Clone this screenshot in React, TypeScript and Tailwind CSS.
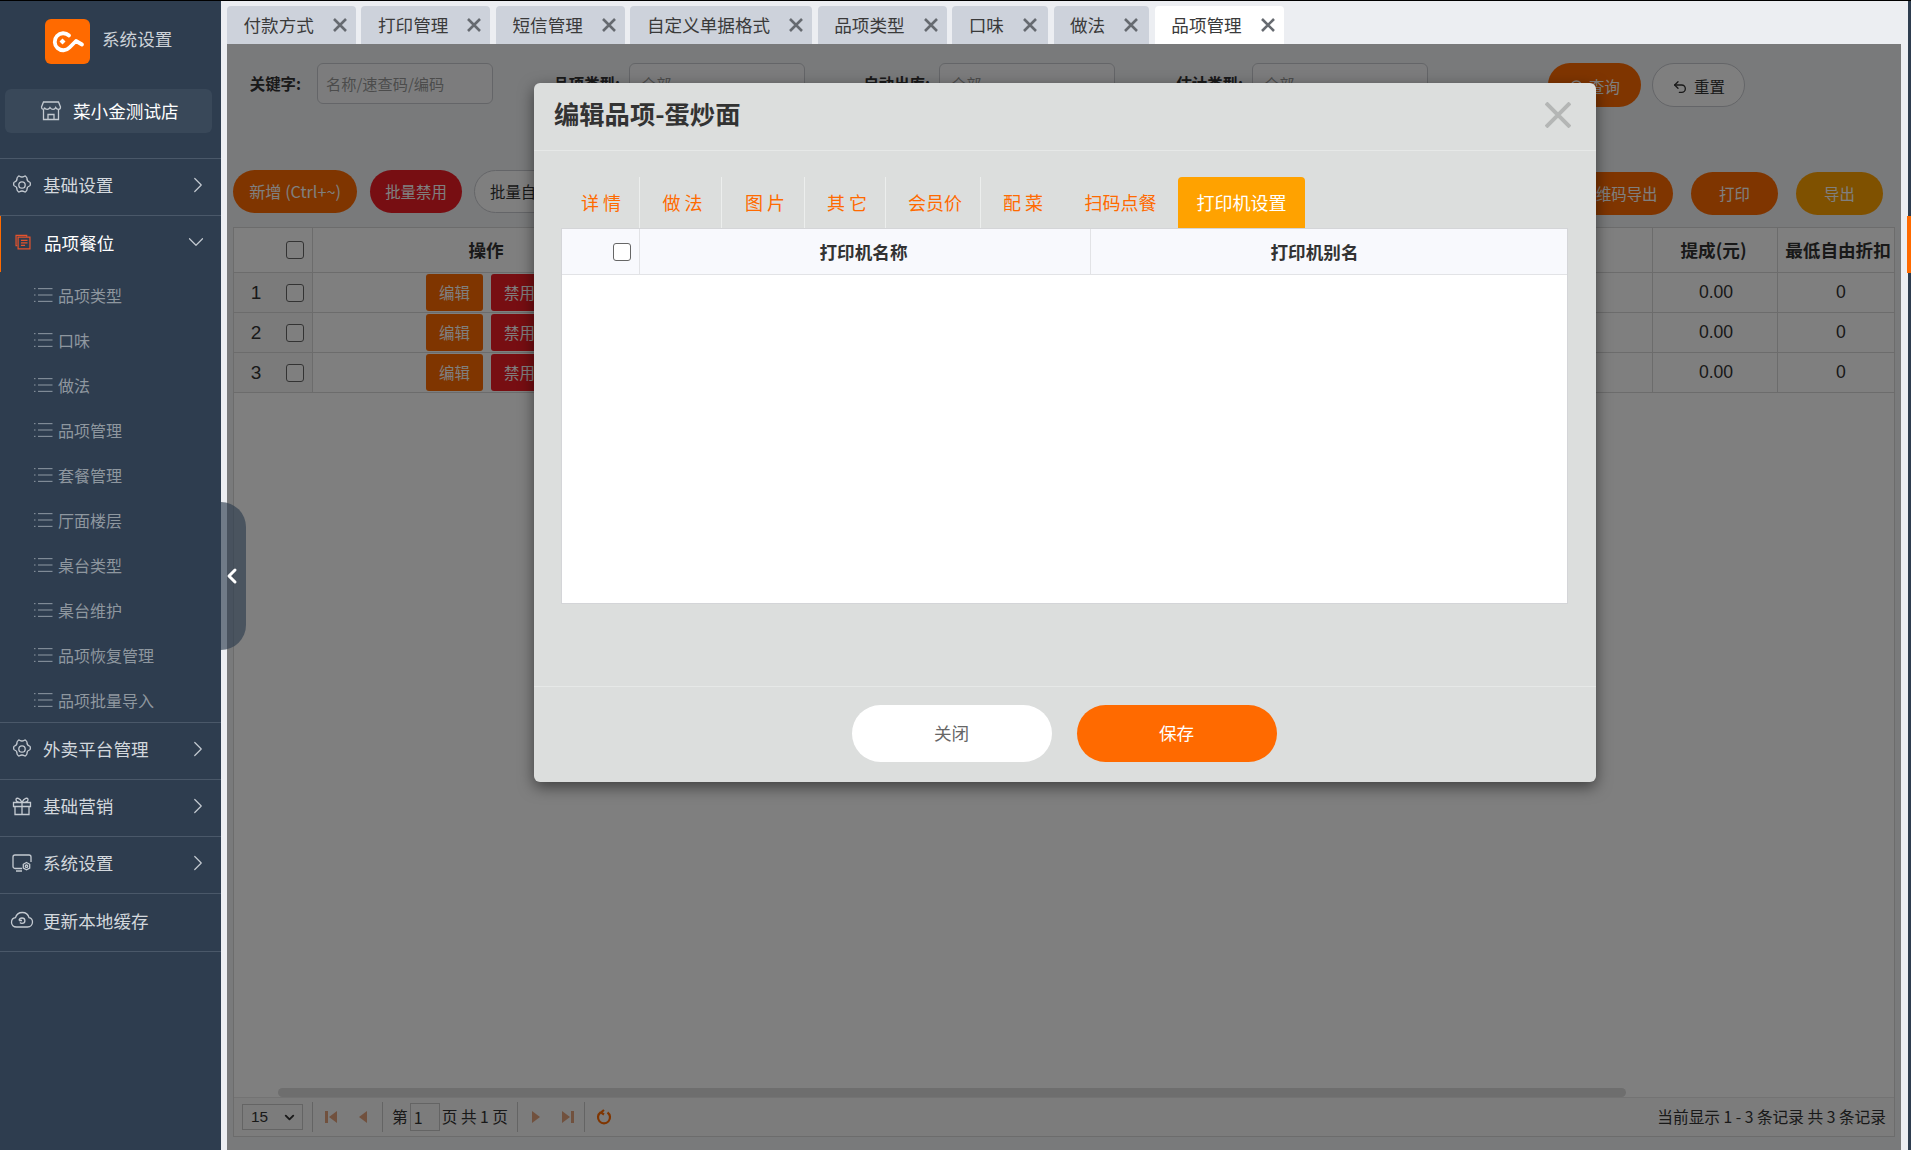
import { ChevronDown, ChevronLeft, ChevronRight, Search, Undo2 } from "lucide-react";

const FONT = "font-['Noto_Sans_CJK_SC','Noto_Sans',sans-serif]";

const pageTabs = [
  { name: "付款方式", cls: "bg-[#cdd2db] pr-[9px]" },
  { name: "打印管理", cls: "bg-[#cdd2db] pr-[9px]" },
  { name: "短信管理", cls: "bg-[#cdd2db] pr-[9px]" },
  { name: "自定义单据格式", cls: "bg-[#cdd2db] pr-[9px]" },
  { name: "品项类型", cls: "bg-[#cdd2db] pr-[9px]" },
  { name: "口味", cls: "bg-[#cdd2db] pr-[11px] pl-[1px]" },
  { name: "做法", cls: "bg-[#cdd2db] pr-[11px] pl-[1px]" },
  { name: "品项管理", cls: "bg-white pr-[9px]" },
];

const subMenu = ["品项类型", "口味", "做法", "品项管理", "套餐管理", "厅面楼层", "桌台类型", "桌台维护", "品项恢复管理", "品项批量导入"];

const modalTabs = [
  { name: "详 情", cls: "w-[81px] border-r border-[#eceeed] pl-[4px]" },
  { name: "做 法", cls: "w-[82px] border-r border-[#eceeed] pl-[4px]" },
  { name: "图 片", cls: "w-[83px] border-r border-[#eceeed] pl-[4px]" },
  { name: "其 它", cls: "w-[81px] border-r border-[#eceeed] pl-[4px]" },
  { name: "会员价", cls: "w-[95px] border-r border-[#eceeed] pl-[4px]" },
  { name: "配 菜", cls: "w-[82px] pl-[2px]" },
  { name: "扫码点餐", cls: "w-[115px]" },
];

const GearIcon = () => (
  <svg width="22" height="22" viewBox="0 0 22 22" fill="none" stroke="currentColor" strokeWidth="1.3">
    <path d="M8.6 2.2c1.3.9 3.5.9 4.8 0 .5-.3 1-.2 1.3.2l.9 1c.3.3.4.7.4 1.100-.1 1.500.9 3 2.400 3.500.5.2.8.6.9 1.100v1.800c-.1.500-.4.900-.9 1.100-1.500.5-2.500 2-2.400 3.500 0 .4-.1.8-.4 1.100l-.9 1c-.3.4-.8.5-1.300.2-1.300-.9-3.500-.9-4.800 0-.5.3-1 .2-1.300-.2l-.9-1c-.3-.3-.4-.7-.4-1.100.1-1.500-.9-3-2.400-3.500-.5-.2-.8-.6-.9-1.100V9.100c.1-.5.4-.9.9-1.100 1.500-.5 2.500-2 2.400-3.500 0-.4.1-.8.4-1.100l.9-1c.3-.4.8-.5 1.300-.2z" />
    <circle cx="11" cy="11" r="3.200" />
  </svg>
);

const GiftIcon = () => (
  <svg width="22" height="22" viewBox="0 0 22 22" fill="none" stroke="currentColor" strokeWidth="1.3">
    <path d="M2.500 7.500h17v4h-17zM4 11.500v8h14v-8M11 7.500v12M11 7.500C9 3 5 2 5 4.800 5 6.500 7 7.500 11 7.500zM11 7.500c2-4.500 6-5.500 6-2.700 0 1.700-2 2.700-6 2.700z" />
  </svg>
);

const MonitorGearIcon = () => (
  <svg width="22" height="22" viewBox="0 0 22 22" fill="none" stroke="currentColor" strokeWidth="1.3">
    <path d="M11 16.500H4a2 2 0 0 1-2-2V5a2 2 0 0 1 2-2h14a2 2 0 0 1 2 2v5M5 19h6" />
    <path d="M15.500 10.500l3.200 1.800v3.700l-3.200 1.800-3.200-1.800v-3.700z" />
    <circle cx="15.500" cy="14.200" r="1.200" />
  </svg>
);

const CloudIcon = () => (
  <svg width="24" height="22" viewBox="0 0 24 22" fill="none" stroke="currentColor" strokeWidth="1.3">
    <path d="M6.500 18C3.500 18 1.500 16 1.500 13.300c0-2.500 1.800-4.300 4-4.600C6.300 5.500 9 3.500 12.300 3.500c3.500 0 6 2.200 6.700 5.200 2 .4 3.500 2.200 3.500 4.400 0 2.800-2 4.900-5 4.900z" />
    <path d="M9 11.500c.3-1.500 1.500-2.500 3-2.500s2.900 1.200 2.900 2.700-1.300 2.600-2.900 2.600c-1 0-1.600-.3-2.100-.8M9 11.500h3" />
  </svg>
);

const ListIcon = () => (
  <svg width="19" height="16" viewBox="0 0 19 16" className="shrink-0 text-[#7f8a96]" fill="currentColor">
    <rect x="0" y="1" width="1.500" height="1.200" />
    <rect x="0" y="7.400" width="1.500" height="1.200" />
    <rect x="0" y="13.800" width="1.500" height="1.200" />
    <rect x="4" y="1" width="14.500" height="1.200" />
    <rect x="4" y="7.400" width="14.500" height="1.200" />
    <rect x="4" y="13.800" width="14.500" height="1.200" />
  </svg>
);

const TabClose = () => (
  <svg width="14" height="14" viewBox="0 0 14 14" stroke="#666a70" strokeWidth="2.600" className="ml-[19px] shrink-0">
    <path d="M1 1l12 12M13 1L1 13" />
  </svg>
);

const MainMenu = ({ icon, label, active }: { icon: React.ReactNode; label: string; active?: boolean }) => (
  <div
    className={`flex items-center text-[17.6px] ${
      active
        ? "h-[56px] border-l-[1px] border-l-[#ff6a00] text-white"
        : "h-[57px] border-b border-[#4a5869] text-[#d3d8dd]"
    }`}
  >
    <div className={`flex w-[43px] shrink-0 justify-center pb-[5px] ${active ? "text-[#e5532d]" : "text-[#c4cad1]"}`}>
      {icon}
    </div>
    <span className={`flex-1 ${active ? "pb-[1px]" : "pb-[3px]"}`}>{label}</span>
    {active ? (
      <ChevronDown size={26} strokeWidth={1.100} className="mr-[12px] mb-[5px] text-[#c4cad1]" />
    ) : (
      <ChevronRight size={26} strokeWidth={1.100} className="mr-[10px] mb-[5px] text-[#c4cad1]" />
    )}
  </div>
);

const Sidebar = () => (
  <aside className="flex w-[221px] shrink-0 flex-col bg-[#2e3d4f]">
    <div className="flex h-[88px] items-start pl-[45px] pt-[18px]">
      <div className="h-[45px] w-[45px] rounded-[6px] bg-[#ff6a00]">
        <svg width="45" height="45" viewBox="0 0 45 45" fill="none" stroke="#fff" strokeWidth="3.800" strokeLinecap="round" strokeLinejoin="round">
          <path d="M24 16.500A8.500 8.500 0 1 0 24.500 28.500L31 22l6 3.500" />
          <path d="M17.500 19.500l3 3-3 3-3-3z" fill="#fff" stroke="none" />
        </svg>
      </div>
      <span className="ml-[12px] mt-[8px] text-[17.6px] leading-[24px] text-[#ccd2d8]">系统设置</span>
    </div>
    <div className="mx-[5px] flex h-[44px] w-[207px] items-center rounded-[6px] bg-[#394859] pl-[35px] text-[17.6px] text-white">
      <svg width="22" height="22" viewBox="0 0 22 22" fill="none" stroke="#c4cad1" strokeWidth="1.300" className="mr-[11px] shrink-0">
        <path d="M3.500 10v9.500h15V10M1.500 7l2-5h15l2 5c0 3-3.500 3-4.800.6-1 2.400-4 2.400-5.700 0-1.300 2.400-4.500 2.400-5.700 0C5 10 1.500 10 1.500 7zM8 19.500v-5h6v5" />
      </svg>
      菜小金测试店
    </div>
    <div className="mt-[25px] border-t border-[#4a5869]">
      <MainMenu icon={<GearIcon />} label="基础设置" />
      <MainMenu
        active
        icon={
          <svg width="18" height="18" viewBox="0 0 22 22" fill="none" stroke="currentColor" strokeWidth="1.500">
            <path d="M4 15.500H2.500V3h13v1.500" />
            <path d="M5 5h14.500v14.500H5zM8.500 9h8M8.500 12h8M8.500 15h5" />
          </svg>
        }
        label="品项餐位"
      />
      <div className="border-b border-[#4a5869]">
        {subMenu.map((item) => (
          <div key={item} className="flex h-[45px] items-center pl-[34px] text-[16px] text-[#8e979f]">
            <ListIcon />
            <span className="ml-[5px]">{item}</span>
          </div>
        ))}
      </div>
      <MainMenu icon={<GearIcon />} label="外卖平台管理" />
      <MainMenu icon={<GiftIcon />} label="基础营销" />
      <MainMenu icon={<MonitorGearIcon />} label="系统设置" />
      <div className="flex h-[58px] items-center border-b border-[#4a5869] text-[17.6px] text-[#d3d8dd]">
        <div className="flex w-[43px] shrink-0 justify-center pb-[5px] text-[#c4cad1]">
          <CloudIcon />
        </div>
        <span className="pb-[3px]">更新本地缓存</span>
      </div>
    </div>
  </aside>
);

const Field = ({ label, labelClass, value, holder }: { label: string; labelClass: string; value?: string; holder?: string }) => (
  <div className="flex items-center">
    <span className={`text-right text-[15.400px] font-bold text-[#333] ${labelClass}`}>{label}</span>
    <div className="ml-[12px] flex h-[41px] w-[176px] items-center rounded-[6px] border border-[#c9cbd0] bg-[#f8f9fb] px-[8px] text-[15.200px] text-[#999]">
      {holder ?? <span className="ml-[3px]">{value}</span>}
    </div>
  </div>
);

const Pill = ({ className, children }: { className: string; children: React.ReactNode }) => (
  <div className={`flex h-[43px] items-center justify-center whitespace-nowrap rounded-full text-[15.400px] ${className}`}>{children}</div>
);

const Checkbox = () => <span className="block h-[18px] w-[18px] rounded-[3px] border-[1.500px] border-[#666] bg-white" />;

const Sep = ({ cls }: { cls: string }) => <span className={`h-[30px] w-px bg-[#c9c9c9] ${cls}`} />;

const PagerArrow = ({ d, cls }: { d: string; cls: string }) => (
  <svg width="14" height="14" viewBox="0 0 14 14" fill="#e2a27c" className={cls}>
    <path d={d} />
  </svg>
);

const BackgroundPage = () => (
  <div className="flex h-full flex-col bg-[#f2f4f7] text-[#333]">
    <div className="mt-[19px] flex h-[44px] items-start">
      <Field label="关键字:" labelClass="ml-[19px] mr-[4px] w-[55px]" holder="名称/速查码/编码" />
      <Field label="品项类型:" labelClass="w-[127px] -mr-[3px]" value="全部" />
      <Field label="自动出库:" labelClass="w-[125px] -mr-[3px]" value="全部" />
      <Field label="估计类型:" labelClass="w-[128px] -mr-[3px]" value="全部" />
      <div className="ml-[120px] flex h-[44px] w-[93px] items-center justify-center gap-1 rounded-full bg-[#ff6a00] pt-[3px] text-[15.400px] text-white">
        <Search size={16} />
        查询
      </div>
      <div className="ml-[11px] flex h-[44px] w-[93px] items-center justify-center gap-[6px] rounded-full border border-[#c9cbd0] bg-white pt-[3px] text-[15.400px]">
        <Undo2 size={16} />
        重置
      </div>
    </div>
    <div className="mx-[6px] mt-[63px] flex items-start justify-between pr-[12px]">
      <div className="flex">
        <Pill className="w-[124px] bg-[#ff6a00] text-white">
          <span className="text-[16.200px]">新增 (Ctrl+~)</span>
        </Pill>
        <Pill className="ml-[13px] w-[92px] bg-[#ee1c25] text-white">批量禁用</Pill>
        <Pill className="ml-[12px] w-[140px] justify-start! border border-[#c9cbd0] bg-white pl-[15px]">批量自动出库</Pill>
      </div>
      <div className="mt-[2px] flex gap-[18px]">
        <Pill className="w-[125px] bg-[#ff6a00] pl-[17px] text-white">二维码导出</Pill>
        <Pill className="w-[87px] bg-[#ff6a00] text-white">打印</Pill>
        <Pill className="w-[87px] bg-[#ffa200] text-white">导出</Pill>
      </div>
    </div>
    <div className="mx-[6px] mt-[12px] flex min-h-0 flex-1 flex-col border border-[#d8d8d8] bg-white">
      <div className="min-h-0 flex-1">
        <div className="flex h-[45px] items-center border-b border-[#d8d8d8] text-[17.600px] font-bold">
          <div className="flex h-full w-[79px] items-center justify-end border-r border-[#d8d8d8] pr-[8px]">
            <Checkbox />
          </div>
          <div className="w-[346px] text-center">操作</div>
          <div className="h-full flex-1 border-r border-[#d8d8d8]" />
          <div className="flex h-full w-[125px] items-center justify-center border-r border-[#d8d8d8] pr-[3px]">提成(元)</div>
          <div className="w-[116px] whitespace-nowrap pl-[4px] text-center">最低自由折扣</div>
        </div>
        {[1, 2, 3].map((n) => (
          <div key={n} className="flex h-[40px] items-center border-b border-[#d8d8d8] font-['Liberation_Sans',sans-serif] text-[17.600px]">
            <div className="h-full w-[44px] bg-[#f7f7f7] pt-[6px] text-center text-[19px]">{n}</div>
            <div className="flex h-full w-[35px] items-center justify-center border-r border-[#d8d8d8] bg-[#f7f7f7] pr-[1px]">
              <Checkbox />
            </div>
            <div className={`flex w-[346px] items-center gap-[8px] pl-[113px] text-[15.400px] text-white ${FONT}`}>
              <span className="flex h-[37px] w-[57px] items-center justify-center rounded-[3px] bg-[#ff6a00]">编辑</span>
              <span className="flex h-[37px] w-[57px] items-center justify-center rounded-[3px] bg-[#ee1c25]">禁用</span>
            </div>
            <div className="h-full flex-1 border-r border-[#d8d8d8]" />
            <div className="flex h-full w-[125px] items-center justify-center border-r border-[#d8d8d8] pl-[2px]">0.00</div>
            <div className="w-[116px] pl-[10px] text-center">0</div>
          </div>
        ))}
      </div>
      <div className="ml-[44px] mr-[268px] h-[9px] rounded-full bg-[#dcdcdc]" />
      <div className="flex h-[39px] items-center justify-between border-t border-[#e6e6e6] bg-[#f8f8f8] pl-[8px] pr-[8px] text-[15.700px]">
        <div className="flex items-center">
          <div className="flex h-[26px] w-[61px] items-center justify-between border border-[#c9c9c9] pl-[8px] pr-[5px] font-['Liberation_Sans',sans-serif] text-[15.400px]">
            15
            <ChevronDown size={15} strokeWidth={3} />
          </div>
          <Sep cls="mx-[9px]" />
          <PagerArrow d="M1 1h3v12H1zM13 1v12L5 7z" cls="mx-[2px]" />
          <PagerArrow d="M10 1v12L2 7z" cls="ml-[17px] mr-[2px]" />
          <Sep cls="mx-[9px]" />
          <span>第</span>
          <span className="mx-[2px] flex h-[28px] w-[30px] items-center border border-[#c9c9c9] pl-[3px] text-[16px]">1</span>
          <span>页 共 1 页</span>
          <Sep cls="mx-[9px]" />
          <PagerArrow d="M3 1v12l8-6z" cls="ml-[2px]" />
          <PagerArrow d="M1 1v12l8-6zM10 1h3v12h-3z" cls="ml-[18px]" />
          <Sep cls="mx-[9px]" />
          <svg width="16" height="16" viewBox="0 0 16 16" fill="none" stroke="#ff6a00" strokeWidth="2.200" className="ml-[2px]">
            <path d="M4.500 3.500a6 6 0 1 0 7 0M8 1l-3 2.500L8 5.500" />
          </svg>
        </div>
        <span>当前显示 1 - 3 条记录 共 3 条记录</span>
      </div>
    </div>
    <div className="h-[13px]" />
  </div>
);

const EditModal = () => (
  <div className="absolute left-[307px] top-[39px] flex h-[699px] w-[1062px] flex-col rounded-[6px] bg-[#dcdedd] shadow-[0_5px_15px_rgba(0,0,0,0.5)]">
    <div className="flex h-[68px] shrink-0 items-start justify-between border-b border-[#e6e8e7] pl-[20px] pr-[25px]">
      <span className="mt-[11px] text-[25.300px] font-bold leading-[38px] text-[#333]">编辑品项-蛋炒面</span>
      <svg width="26" height="26" viewBox="0 0 26 26" stroke="#b4b6b5" strokeWidth="4" className="mt-[19px]">
        <path d="M1 1l24 24M25 1L1 25" />
      </svg>
    </div>
    <div className="flex-1 pl-[27px] pr-[28px] pt-[26px]">
      <div className="-ml-[2px] flex h-[51px] items-stretch text-[18px] text-[#ff6a00]">
        {modalTabs.map((t) => (
          <div key={t.name} className={`flex items-center justify-center ${t.cls}`}>
            {t.name}
          </div>
        ))}
        <div className="flex w-[127px] items-center justify-center rounded-t-[4px] bg-[#ffa200] text-white">打印机设置</div>
      </div>
      <div className="h-[376px] border border-[#d4d5d8] bg-white">
        <div className="flex h-[46px] border-b border-[#e2e3e6] bg-[#f8f9fd] text-[17.600px] font-bold text-[#333]">
          <div className="flex w-[78px] shrink-0 items-center justify-end border-r border-[#e2e3e6] pr-[8px] pt-[1px]">
            <Checkbox />
          </div>
          <div className="flex w-[451px] shrink-0 items-center justify-center border-r border-[#e2e3e6] pr-[3px] pt-[1px]">打印机名称</div>
          <div className="flex flex-1 items-center justify-center pr-[29px] pt-[1px]">打印机别名</div>
        </div>
      </div>
    </div>
    <div className="flex h-[96px] shrink-0 items-start justify-center gap-[25px] border-t border-[#e6e8e7] pr-[2px] pt-[18px] text-[17.600px]">
      <div className="flex h-[57px] w-[200px] items-center justify-center rounded-full bg-white text-[#666]">关闭</div>
      <div className="flex h-[57px] w-[200px] items-center justify-center rounded-full bg-[#ff6a00] text-white">保存</div>
    </div>
  </div>
);

export default function App() {
  return (
    <div className={`flex h-[1150px] w-[1911px] overflow-hidden border-t border-black bg-[#eceef2] ${FONT}`}>
      <Sidebar />
      <div className="relative flex min-w-0 flex-1 flex-col pl-[6px] pr-[10px]">
        <div className="flex h-[43px] shrink-0 items-end gap-[5.600px] pt-[5px]">
          {pageTabs.map((tab) => (
            <div
              key={tab.name}
              className={`flex h-[38px] items-center rounded-t-[4px] pl-[16.500px] text-[17.600px] text-[#3a3a3a] ${tab.cls}`}
            >
              {tab.name}
              <TabClose />
            </div>
          ))}
        </div>
        <div className="relative min-h-0 flex-1">
          <BackgroundPage />
          <div className="absolute inset-0 bg-black/50" />
          <EditModal />
        </div>
        <div className="absolute left-0 top-[501px] flex h-[148px] w-[25px] items-center rounded-r-[26px] bg-[#2e3d4f]/65">
          <ChevronLeft size={24} strokeWidth={3} className="-ml-[1px] text-white" />
        </div>
        <div className="absolute right-0 top-0 h-full w-[3px] bg-[#2e3d4f]" />
        <div className="absolute right-0 top-[215px] h-[57px] w-[4px] bg-[#ff6a00]" />
      </div>
    </div>
  );
}
